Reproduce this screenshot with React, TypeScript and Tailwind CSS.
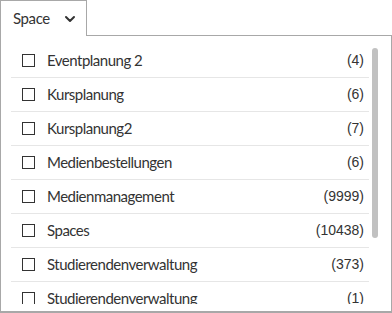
import React from "react";

const items: [string, string][] = [
  ["Eventplanung 2", "(4)"],
  ["Kursplanung", "(6)"],
  ["Kursplanung2", "(7)"],
  ["Medienbestellungen", "(6)"],
  ["Medienmanagement", "(9999)"],
  ["Spaces", "(10438)"],
  ["Studierendenverwaltung", "(373)"],
  ["Studierendenverwaltung", "(1)"],
];

export default function App() {
  return (
    <div className="w-[392px] h-[313px] bg-white overflow-hidden text-[#333]" style={{ fontFamily: "Lato, sans-serif" }}>
      <div className="flex h-[36px]">
        <div className="w-[87px] h-[36px] border border-b-0 border-[#a8a8a8] flex items-center pl-[12px] pr-[6px] bg-white">
          <span className="text-[15px] tracking-[-0.4px] text-[#333]">Space</span>
          <svg className="ml-auto mr-[4px]" width="12" height="12" viewBox="0 0 12 12" fill="none">
            <path d="M2 4 L6 8 L10 4" stroke="#333" strokeWidth="2" strokeLinecap="round" strokeLinejoin="round" />
          </svg>
        </div>
        <div className="flex-1 border-b border-[#a8a8a8]" />
      </div>
      <div className="relative h-[277px] border-x border-b-2 border-[#a8a8a8] pb-[7px]">
        <div className="h-[268px] overflow-hidden pl-[10px] pr-[22px] pt-[8px]">
          {items.map(([label, count], i) => (
            <div key={i} className="flex items-center h-[34px] border-b border-[#e6e6e6]">
              <div className="w-[13px] h-[13px] border-[1.5px] border-[#333] ml-[11px] shrink-0" />
              <span className="ml-[12px] text-[15px] tracking-[-0.5px]">{label}</span>
              <span className="ml-auto mr-[5px] text-[14px]" style={{ fontFamily: "'Liberation Sans', sans-serif" }}>{count}</span>
            </div>
          ))}
        </div>
        <div className="absolute right-[13px] top-[12px] w-[6px] h-[190px] rounded-full bg-[#c1c1c1]" />
      </div>
    </div>
  );
}
